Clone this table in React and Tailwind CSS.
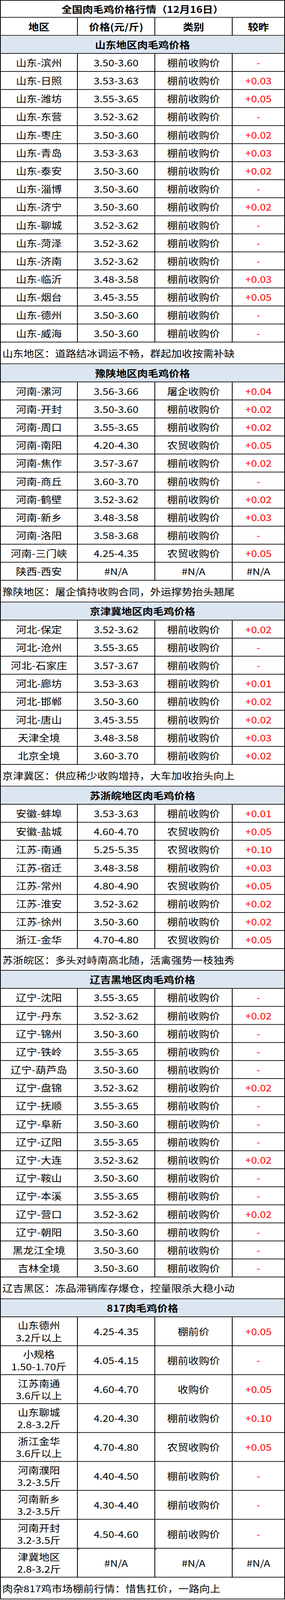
const NQ = "棚前收购价";
const NM = "农贸收购价";

const sections = [
  {
    title: "山东地区肉毛鸡价格",
    rows: [
      ["山东-滨州", "3.50-3.60", NQ, "-"],
      ["山东-日照", "3.53-3.63", NQ, "+0.03"],
      ["山东-潍坊", "3.55-3.65", NQ, "+0.05"],
      ["山东-东营", "3.52-3.62", NQ, "-"],
      ["山东-枣庄", "3.50-3.60", NQ, "+0.02"],
      ["山东-青岛", "3.53-3.63", NQ, "+0.03"],
      ["山东-泰安", "3.50-3.60", NQ, "+0.02"],
      ["山东-淄博", "3.50-3.60", NQ, "-"],
      ["山东-济宁", "3.50-3.60", NQ, "+0.02"],
      ["山东-聊城", "3.52-3.62", NQ, "-"],
      ["山东-菏泽", "3.52-3.62", NQ, "-"],
      ["山东-济南", "3.52-3.62", NQ, "-"],
      ["山东-临沂", "3.48-3.58", NQ, "+0.03"],
      ["山东-烟台", "3.45-3.55", NQ, "+0.05"],
      ["山东-德州", "3.50-3.60", NQ, "-"],
      ["山东-威海", "3.50-3.60", NQ, "-"],
    ],
    note: "山东地区：道路结冰调运不畅，群起加收按需补缺",
  },
  {
    title: "豫陕地区肉毛鸡价格",
    rows: [
      ["河南-漯河", "3.56-3.66", "屠企收购价", "+0.04"],
      ["河南-开封", "3.50-3.60", NQ, "+0.02"],
      ["河南-周口", "3.55-3.65", NQ, "+0.02"],
      ["河南-南阳", "4.20-4.30", NM, "+0.05"],
      ["河南-焦作", "3.57-3.67", NQ, "+0.02"],
      ["河南-商丘", "3.60-3.70", NQ, "-"],
      ["河南-鹤壁", "3.52-3.62", NQ, "+0.02"],
      ["河南-新乡", "3.48-3.58", NQ, "+0.03"],
      ["河南-洛阳", "3.58-3.68", NQ, "-"],
      ["河南-三门峡", "4.25-4.35", NM, "+0.05"],
      ["陕西-西安", "#N/A", "#N/A", "#N/A"],
    ],
    note: "豫陕地区：屠企慎持收购合同，外运撑势抬头翘尾",
  },
  {
    title: "京津冀地区肉毛鸡价格",
    rows: [
      ["河北-保定", "3.52-3.62", NQ, "+0.02"],
      ["河北-沧州", "3.55-3.65", NQ, "-"],
      ["河北-石家庄", "3.57-3.67", NQ, "-"],
      ["河北-廊坊", "3.53-3.63", NQ, "+0.01"],
      ["河北-邯郸", "3.50-3.60", NQ, "+0.02"],
      ["河北-唐山", "3.45-3.55", NQ, "+0.02"],
      ["天津全境", "3.48-3.58", NQ, "+0.03"],
      ["北京全境", "3.60-3.70", NQ, "+0.02"],
    ],
    note: "京津冀区：供应稀少收购增持，大车加收抬头向上",
  },
  {
    title: "苏浙皖地区肉毛鸡价格",
    rows: [
      ["安徽-蚌埠", "3.53-3.63", NQ, "+0.01"],
      ["安徽-盐城", "4.60-4.70", NM, "+0.05"],
      ["江苏-南通", "5.25-5.35", NM, "+0.10"],
      ["江苏-宿迁", "3.48-3.58", NQ, "+0.03"],
      ["江苏-常州", "4.80-4.90", NM, "+0.05"],
      ["江苏-淮安", "3.52-3.62", NQ, "+0.02"],
      ["江苏-徐州", "3.50-3.60", NQ, "+0.02"],
      ["浙江-金华", "4.70-4.80", NM, "+0.05"],
    ],
    note: "苏浙皖区：多头对峙南高北随，活禽强势一枝独秀",
  },
  {
    title: "辽吉黑地区肉毛鸡价格",
    rows: [
      ["辽宁-沈阳", "3.55-3.65", NQ, "-"],
      ["辽宁-丹东", "3.52-3.62", NQ, "+0.02"],
      ["辽宁-锦州", "3.50-3.60", NQ, "-"],
      ["辽宁-铁岭", "3.55-3.65", NQ, "-"],
      ["辽宁-葫芦岛", "3.50-3.60", NQ, "-"],
      ["辽宁-盘锦", "3.52-3.62", NQ, "+0.02"],
      ["辽宁-抚顺", "3.55-3.65", NQ, "-"],
      ["辽宁-阜新", "3.50-3.60", NQ, "-"],
      ["辽宁-辽阳", "3.55-3.65", NQ, "-"],
      ["辽宁-大连", "3.52-3.62", NQ, "+0.02"],
      ["辽宁-鞍山", "3.50-3.60", NQ, "-"],
      ["辽宁-本溪", "3.55-3.65", NQ, "-"],
      ["辽宁-营口", "3.52-3.62", NQ, "+0.02"],
      ["辽宁-朝阳", "3.50-3.60", NQ, "-"],
      ["黑龙江全境", "3.50-3.60", NQ, "-"],
      ["吉林全境", "3.50-3.60", NQ, "-"],
    ],
    note: "辽吉黑区：冻品滞销库存爆仓，控量限杀大稳小动",
  },
  {
    title: "817肉毛鸡价格",
    tall: true,
    rows: [
      [["山东德州", "3.2斤以上"], "4.25-4.35", "棚前价", "+0.05"],
      [["小规格", "1.50-1.70斤"], "4.05-4.15", NQ, "-"],
      [["江苏南通", "3.6斤以上"], "4.60-4.70", "收购价", "+0.05"],
      [["山东聊城", "2.8-3.2斤"], "4.20-4.30", NQ, "+0.10"],
      [["浙江金华", "3.6斤以上"], "4.70-4.80", NM, "+0.05"],
      [["河南濮阳", "3.2-3.5斤"], "4.40-4.50", NQ, "-"],
      [["河南新乡", "3.2-3.5斤"], "4.30-4.40", NQ, "-"],
      [["河南开封", "3.2-3.5斤"], "4.50-4.60", NQ, "-"],
      [["津冀地区", "2.8-3.2斤"], "#N/A", "#N/A", "#N/A", true],
    ],
    note: "肉杂817鸡市场棚前行情：惜售扛价，一路向上",
  },
];

const cell = "flex items-center justify-center border-r-2 border-b-2 border-black";

// small green corner mark, like the excel error flag
const Flag = () => (
  <span className="absolute left-0 top-0 w-0 h-0 border-t-[5px] border-r-[5px] border-t-[#1f8a1f] border-r-transparent" />
);

const Row = ({ row, tall }) => {
  const [area, price, kind, diff, flag] = row;
  return (
    <div
      className={`grid grid-cols-[197px_198px_198px_134px] shrink-0 ${
        tall ? "h-[85px]" : "h-[53px]"
      }`}
    >
      <div className={`${cell} flex-col leading-[36px]`}>
        {Array.isArray(area) ? area.map((t) => <span key={t}>{t}</span>) : area}
      </div>
      <div className={`${cell} relative`}>
        {flag && <Flag />}
        {price}
      </div>
      <div className={`${cell} relative`}>
        {flag && <Flag />}
        {kind}
      </div>
      <div className={`${cell} relative ${diff === "#N/A" ? "text-black" : "text-[#ff0000]"}`}>
        {flag && <Flag />}
        {diff}
      </div>
    </div>
  );
};

const Section = ({ data }) => (
  <>
    <div className="h-[53px] shrink-0 flex items-center justify-center bg-[#dce6f1] border-r-2 border-b-2 border-black font-bold">
      {data.title}
    </div>
    {data.rows.map((r, i) => (
      <Row key={i} row={r} tall={data.tall} />
    ))}
    <div className="h-[64px] shrink-0 flex items-center pl-1 border-r-2 border-b-2 border-black">
      {data.note}
    </div>
  </>
);

// the shot only grabs a 4096px tall viewport and stretches it to 4701,
// so the table is squeezed by 4096/4701 to come out at its true size
export default function App() {
  return (
    <div className="w-[729px] h-[4096px] overflow-hidden bg-white">
      <div className="w-[729px] origin-top scale-y-[0.8713] text-black text-[27px] leading-none font-['Noto_Sans_CJK_SC','Noto_Sans',sans-serif]">
        <div className="border-l-2 border-t-2 border-black flex flex-col">
          <div className="h-[50px] shrink-0 flex items-center justify-center border-r-2 border-b-2 border-black font-bold">
            全国肉毛鸡价格行情（12月16日）
          </div>
          <div className="grid grid-cols-[197px_198px_198px_134px] h-[53px] shrink-0 font-bold">
            <div className={cell}>地区</div>
            <div className={cell}>价格(元/斤)</div>
            <div className={cell}>类别</div>
            <div className={cell}>较昨</div>
          </div>
          {sections.map((s) => (
            <Section key={s.title} data={s} />
          ))}
        </div>
      </div>
    </div>
  );
}
